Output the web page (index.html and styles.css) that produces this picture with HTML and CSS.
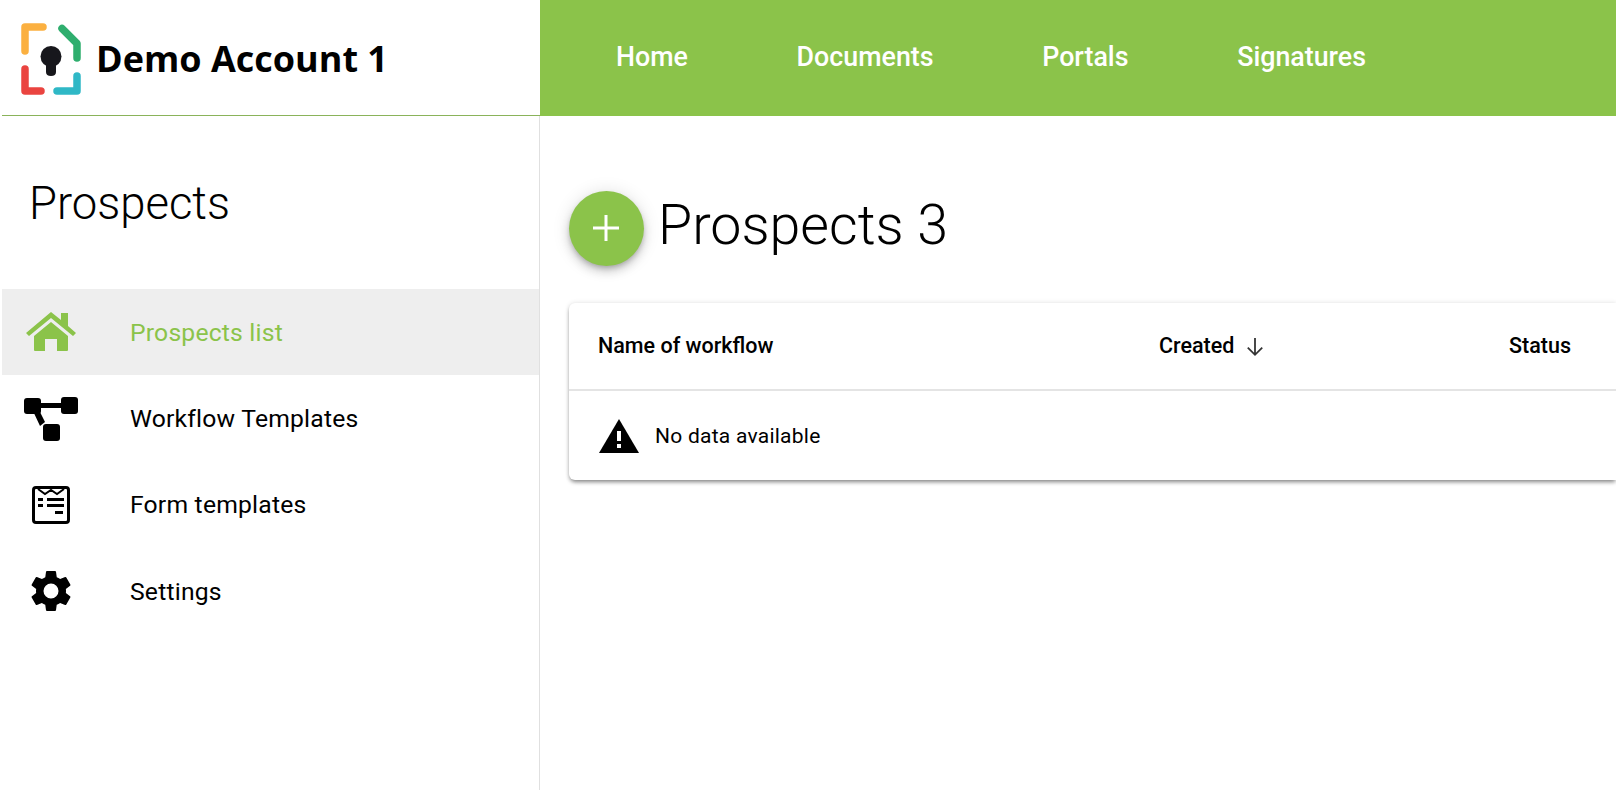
FILE: index.html
```html
<!doctype html>
<html>
<head>
<title>Prospects</title>
<link rel="stylesheet" href="styles.css">
</head>
<body>

<header class="topbar">
	<div class="brand">
		<svg class="brand-logo" viewBox="0 0 60 72" width="60" height="72">
			<path class="logo-stroke" d="M4 28V4H22" stroke="#fbb040"/>
			<path class="logo-stroke" d="M41 5.5L56 20.5V35" stroke="#2fae6e"/>
			<path class="logo-stroke" d="M4 46V68H20" stroke="#ea4440"/>
			<path class="logo-stroke" d="M56 53V68H36" stroke="#2fb8c6"/>
			<circle cx="30" cy="33.5" r="10.5" fill="#17171c"/>
			<path d="M25 38H35V49Q35 53 30 53Q25 53 25 49Z" fill="#17171c"/>
		</svg>
		<span class="brand-name">Demo Account 1</span>
	</div>
	<nav class="topnav">
		<a class="topnav-link">Home</a>
		<a class="topnav-link">Documents</a>
		<a class="topnav-link">Portals</a>
		<a class="topnav-link">Signatures</a>
	</nav>
</header>

<div class="layout">
	<aside class="sidebar">
		<div class="sidebar-title">Prospects</div>
		<ul class="menu">
			<li class="menu-item active">
				<span class="menu-icon">
					<svg viewBox="0 0 50 40" width="50" height="40" fill="#8bc34a">
						<path d="M0 21L25 0L35 8V1H42V14L50 21L47 24L25 6L3 24Z"/>
						<path d="M8 24L25 10L42 24V38Q42 39 41 39H31V27H19V39H9Q8 39 8 38Z"/>
					</svg>
				</span>
				<span>Prospects list</span>
			</li>
			<li class="menu-item">
				<span class="menu-icon">
					<svg viewBox="0 0 54 44" width="54" height="44">
						<rect x="0" y="1" width="17" height="16" rx="3"/>
						<rect x="37" y="0" width="17" height="17" rx="3"/>
						<rect x="19" y="27" width="17" height="17" rx="3"/>
						<path d="M14 6H38V11H14Z"/>
						<path d="M9 14L14 11L21 25L16 29Z"/>
					</svg>
				</span>
				<span>Workflow Templates</span>
			</li>
			<li class="menu-item">
				<span class="menu-icon">
					<svg viewBox="0 0 38 38" width="38" height="38">
						<rect x="1.5" y="1.5" width="35" height="35" rx="2.5" fill="none" stroke="#000" stroke-width="3"/>
						<path d="M6 3L13 8L19 4L25 8L32 3" fill="none" stroke="#000" stroke-width="2"/>
						<path d="M6 12H11V15H6ZM15 12H32V15H15ZM6 18H11V21H6ZM15 18H32V21H15ZM23 25H31V28H23Z"/>
					</svg>
				</span>
				<span>Form templates</span>
			</li>
			<li class="menu-item">
				<span class="menu-icon">
					<svg viewBox="0 0 24 24" width="50" height="50">
						<path d="M19.14 12.94c.04-.3.06-.61.06-.94s-.02-.64-.07-.94l2.03-1.58a.49.49 0 0 0 .12-.61l-1.92-3.32a.49.49 0 0 0-.59-.22l-2.39.96a7 7 0 0 0-1.62-.94l-.36-2.54a.48.48 0 0 0-.48-.41h-3.84a.47.47 0 0 0-.47.41l-.36 2.54c-.59.24-1.13.57-1.62.94l-2.39-.96a.48.48 0 0 0-.59.22L2.74 8.87a.47.47 0 0 0 .12.61l2.03 1.58c-.05.3-.09.63-.09.94s.02.64.07.94l-2.03 1.58a.49.49 0 0 0-.12.61l1.92 3.32c.12.22.37.29.59.22l2.39-.96c.5.38 1.03.7 1.62.94l.36 2.54c.05.24.24.41.48.41h3.84c.24 0 .44-.17.47-.41l.36-2.54c.59-.24 1.13-.56 1.62-.94l2.39.96c.22.08.47 0 .59-.22l1.92-3.32a.47.47 0 0 0-.12-.61l-2.01-1.58zM12 15.6a3.6 3.6 0 1 1 0-7.2 3.6 3.6 0 0 1 0 7.2z"/>
					</svg>
				</span>
				<span>Settings</span>
			</li>
		</ul>
	</aside>

	<main class="content">
		<div class="page-head">
			<button class="add-button">
				<svg viewBox="0 0 26 26" width="26" height="26">
					<path d="M11.5 0H14.5V11.5H26V14.5H14.5V26H11.5V14.5H0V11.5H11.5Z" fill="#fff"/>
				</svg>
			</button>
			<h1 class="page-title">Prospects 3</h1>
		</div>

		<div class="card">
			<div class="table-head">
				<div class="col-name">Name of workflow</div>
				<div class="col-created">
					Created
					<svg class="sort-arrow" viewBox="0 0 18 18" width="20" height="20">
						<path d="M9 1V16M2.5 9.5L9 16L15.5 9.5" fill="none" stroke="#333" stroke-width="1.6"/>
					</svg>
				</div>
				<div class="col-status">Status</div>
			</div>
			<div class="table-empty">
				<svg viewBox="0 0 40 34" width="40" height="34">
					<path d="M20 0L40 34H0Z"/>
					<path d="M18 12H22V22H18ZM18 25H22V29H18Z" fill="#fff"/>
				</svg>
				<span>No data available</span>
			</div>
		</div>
	</main>
</div>

</body>
</html>
```

FILE: styles.css
```css
html, body {
	height: 100%;
}

body {
	margin: 0;
	overflow: hidden;
	background: #ffffff;
	color: #000000;
	font-family: Roboto, "Liberation Sans", sans-serif;
	display: flex;
	flex-direction: column;
}

/* top bar */

.topbar {
	display: flex;
	height: 116px;
	flex-shrink: 0;
}

.brand {
	width: 538px;
	margin-left: 2px;
	display: flex;
	align-items: center;
	gap: 15px;
	padding-left: 19px;
	padding-bottom: 1px;
	box-sizing: border-box;
	border-bottom: solid 1px #8ab35a;
}

.brand-logo {
	margin-top: 4px;
}

.logo-stroke {
	fill: none;
	stroke-width: 7.5;
	stroke-linecap: round;
	stroke-linejoin: round;
}

.brand-name {
	font-family: "Open Sans", sans-serif;
	font-weight: 700;
	font-size: 36px;
	margin-top: 2px;
}

.topnav {
	flex: 1;
	display: flex;
	align-items: center;
	gap: 108.7px;
	padding-left: 76px;
	padding-bottom: 3px;
	background: #8bc34a;
}

.topnav-link {
	color: #ffffff;
	font-weight: 500;
	font-size: 26.8px;
}

/* sidebar */

.layout {
	flex: 1;
	display: flex;
}

.sidebar {
	width: 540px;
	padding-left: 2px;
	box-sizing: border-box;
	border-right: solid 1px #e0e0e0;
}

.sidebar-title {
	padding-left: 27px;
	margin-top: 63px;
	height: 110px;
	font-weight: 300;
	font-size: 45.4px;
	line-height: 50px;
}

.menu {
	list-style: none;
	margin: 0;
	padding: 0;
}

.menu-item {
	display: flex;
	align-items: center;
	height: 86.4px;
	font-size: 24.7px;
	letter-spacing: 0.2px;
}

.menu-item.active {
	background: #eeeeee;
	color: #8bc34a;
}

.menu-icon {
	width: 128px;
	padding-left: 20px;
	padding-right: 50px;
	box-sizing: border-box;
	display: flex;
	justify-content: center;
}

/* content */

.content {
	flex: 1;
	padding: 75px 0 0 29px;
	min-width: 0;
}

.page-head {
	display: flex;
	align-items: center;
	gap: 14px;
}

.add-button {
	width: 75px;
	height: 75px;
	padding: 0 2px 2px 0;
	border: none;
	border-radius: 50%;
	background: #8bc34a;
	display: flex;
	align-items: center;
	justify-content: center;
	box-shadow: 0 3px 5px -1px rgba(0,0,0,0.2), 0 6px 10px 0 rgba(0,0,0,0.14), 0 1px 18px 0 rgba(0,0,0,0.12);
}

.page-title {
	margin: -6px 0 0;
	font-weight: 300;
	font-size: 55.5px;
	line-height: 64px;
}

.card {
	margin-top: 37px;
	border-radius: 6px 0 0 6px;
	background: #ffffff;
	box-shadow: 0 3px 4px -1px rgba(0,0,0,0.45), 0 0 5px 0 rgba(0,0,0,0.12);
}

.table-head {
	display: flex;
	align-items: center;
	height: 85px;
	padding-left: 29px;
	padding-bottom: 1px;
	border-bottom: solid 2px #e4e4e4;
	font-weight: 500;
	font-size: 21.5px;
}

.col-name {
	width: 561px;
}

.col-created {
	width: 350px;
	display: flex;
	align-items: center;
	gap: 11px;
}

.sort-arrow {
	margin-top: 2px;
}

.table-empty {
	display: flex;
	align-items: center;
	gap: 16px;
	height: 89px;
	padding-left: 30px;
	font-size: 21px;
	letter-spacing: 0.25px;
}
```
